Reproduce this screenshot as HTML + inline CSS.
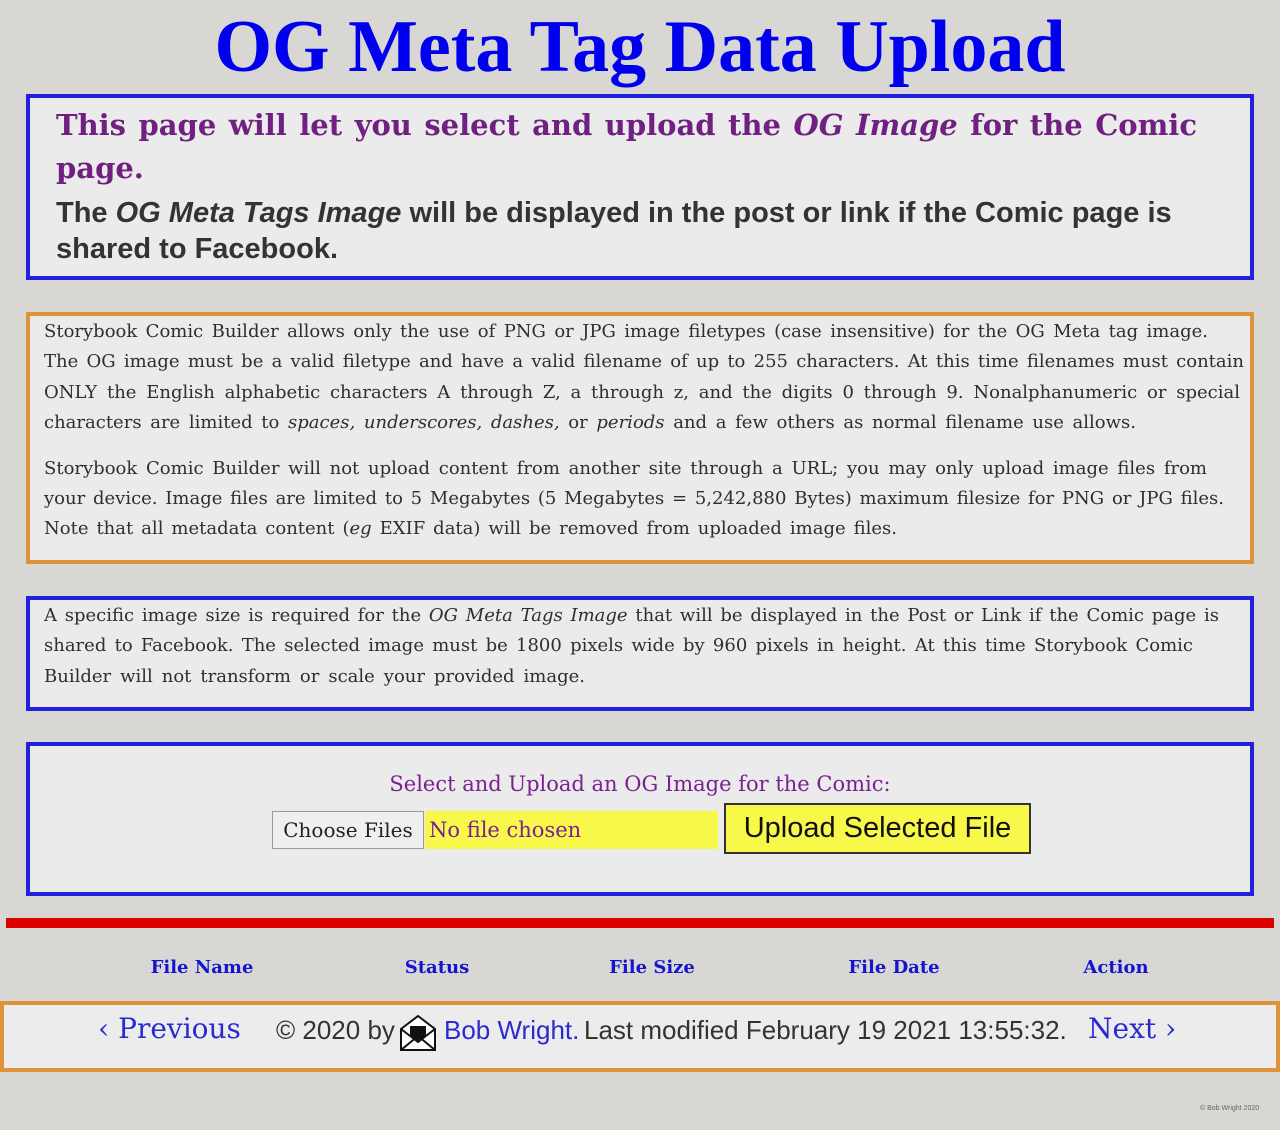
<!DOCTYPE html>
<html><head><meta charset="utf-8"><style>
body{margin:0;width:1280px;height:1130px;background:#d9d7d3;position:relative;overflow:hidden;font-family:"DejaVu Serif",serif;}
.a{position:absolute;white-space:nowrap;}
.box{position:absolute;box-sizing:border-box;background:#ebebeb;}
.bl{border:4px solid #2020dd;}
.or{border:4px solid #e0913c;}
.j{position:absolute;left:44px;text-align:justify;text-align-last:justify;white-space:nowrap;font-size:18px;color:#2e2e2e;line-height:24px;}
.h{position:absolute;top:957px;font-weight:bold;color:#1515d0;font-size:18px;transform:translateX(-50%);}
</style></head><body>
<div class="a" style="left:0;width:1280px;text-align:center;top:2px;font-family:'Liberation Serif',serif;font-size:74px;font-weight:bold;color:#0000ee;line-height:90px;">OG Meta Tag Data Upload</div>

<div class="box bl" style="left:26px;top:94px;width:1228px;height:186px;"></div>
<div class="a" style="left:56px;top:108px;font-size:29px;font-weight:bold;color:#702080;width:1141px;text-align-last:justify;text-align:justify;">This page will let you select and upload the <i>OG Image</i> for the Comic</div>
<div class="a" style="left:56px;top:151px;font-size:29px;font-weight:bold;color:#702080;">page.</div>
<div class="a" style="left:56px;top:197px;font-family:'Liberation Sans',sans-serif;font-size:29px;font-weight:bold;color:#333;width:1106px;text-align:justify;text-align-last:justify;">The <i>OG Meta Tags Image</i> will be displayed in the post or link if the Comic page is</div>
<div class="a" style="left:56px;top:233px;font-family:'Liberation Sans',sans-serif;font-size:29px;font-weight:bold;color:#333;">shared to Facebook.</div>

<div class="box or" style="left:26px;top:312px;width:1228px;height:252px;"></div>
<div class="j" style="top:320px;width:1164px;">Storybook Comic Builder allows only the use of PNG or JPG image filetypes (case insensitive) for the OG Meta tag image.</div>
<div class="j" style="top:350px;width:1200px;">The OG image must be a valid filetype and have a valid filename of up to 255 characters. At this time filenames must contain</div>
<div class="j" style="top:381px;width:1196px;">ONLY the English alphabetic characters A through Z, a through z, and the digits 0 through 9. Nonalphanumeric or special</div>
<div class="j" style="top:411px;width:1092px;">characters are limited to <i>spaces, underscores, dashes,</i> or <i>periods</i> and a few others as normal filename use allows.</div>
<div class="j" style="top:457px;width:1163px;">Storybook Comic Builder will not upload content from another site through a URL; you may only upload image files from</div>
<div class="j" style="top:487px;width:1180px;">your device. Image files are limited to 5 Megabytes (5 Megabytes = 5,242,880 Bytes) maximum filesize for PNG or JPG files.</div>
<div class="j" style="top:517px;width:853px;">Note that all metadata content (<i>eg</i> EXIF data) will be removed from uploaded image files.</div>

<div class="box bl" style="left:26px;top:596px;width:1228px;height:115px;"></div>
<div class="j" style="top:604px;width:1175px;">A specific image size is required for the <i>OG Meta Tags Image</i> that will be displayed in the Post or Link if the Comic page is</div>
<div class="j" style="top:634px;width:1149px;">shared to Facebook. The selected image must be 1800 pixels wide by 960 pixels in height. At this time Storybook Comic</div>
<div class="j" style="top:665px;width:541px;">Builder will not transform or scale your provided image.</div>

<div class="box bl" style="left:26px;top:742px;width:1228px;height:154px;"></div>
<div class="a" style="left:0;width:1280px;text-align:center;top:772px;font-size:21px;color:#7a2090;">Select and Upload an OG Image for the Comic:</div>
<div class="a" style="left:272px;top:811px;width:152px;height:38px;box-sizing:border-box;border:1px solid #999;background:#efefef;font-size:20px;color:#222;text-align:center;line-height:36px;">Choose Files</div>
<div class="a" style="left:425px;top:811px;width:293px;height:38px;background:#f8f84a;font-size:21px;color:#7a2090;line-height:38px;padding-left:4px;box-sizing:border-box;">No file chosen</div>
<div class="a" style="left:724px;top:803px;width:307px;height:51px;box-sizing:border-box;border:2px solid #333;background:#f8f84a;font-family:'Liberation Sans',sans-serif;font-size:29px;color:#111;text-align:center;line-height:47px;">Upload Selected File</div>

<div class="a" style="left:6px;top:918px;width:1268px;height:10px;background:#dd0000;"></div>
<div class="h" style="left:202px;">File Name</div>
<div class="h" style="left:437px;">Status</div>
<div class="h" style="left:652px;">File Size</div>
<div class="h" style="left:894px;">File Date</div>
<div class="h" style="left:1116px;">Action</div>

<div class="box or" style="left:0;top:1001px;width:1280px;height:71px;background:#ececec;"></div>
<div class="a" style="left:98px;top:1012px;font-size:28px;color:#2a2ad0;">&#x2039; Previous</div>
<div class="a" style="left:276px;top:1015px;font-family:'Liberation Sans',sans-serif;font-size:26px;color:#333;">© 2020 by</div>
<svg class="a" style="left:399px;top:1014px" width="38" height="38" viewBox="0 0 38 38"><path d="M2 15 L19 2 L36 15 V36 H2 Z" fill="#fff" stroke="#111" stroke-width="2"/><path d="M2 36 L19 22 L36 36 M2 15 L19 28 L36 15" fill="none" stroke="#111" stroke-width="2"/><path d="M11 12 H27 V21 L19 27 L11 21Z" fill="#111"/></svg>
<div class="a" style="left:444px;top:1015px;font-family:'Liberation Sans',sans-serif;font-size:26px;color:#2a2ad0;">Bob Wright.</div>
<div class="a" style="left:584px;top:1015px;font-family:'Liberation Sans',sans-serif;font-size:26px;color:#333;width:476px;text-align:justify;text-align-last:justify;">Last modified February 19 2021 13:55:32.</div>
<div class="a" style="left:1088px;top:1012px;font-size:28px;color:#2a2ad0;">Next &#x203A;</div>
<div class="a" style="left:1200px;top:1105px;font-family:'Liberation Sans',sans-serif;font-size:7px;color:#666;">© Bob Wright 2020</div>
</body></html>
